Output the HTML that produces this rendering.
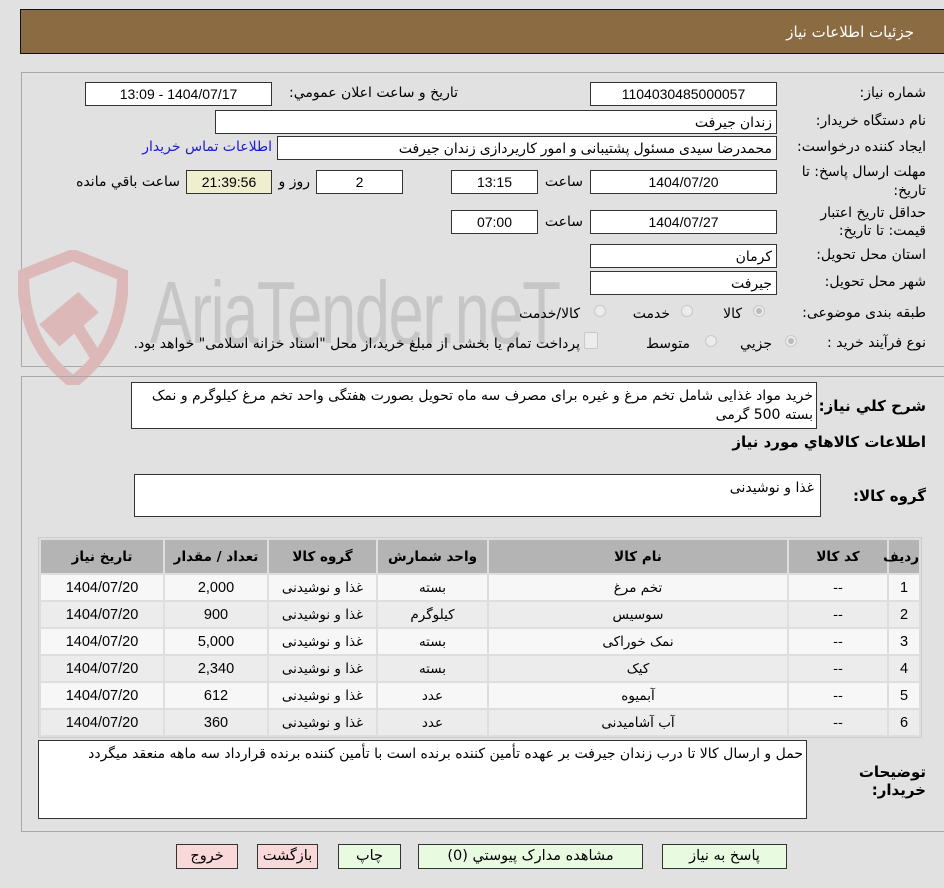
<!DOCTYPE html>
<html><head><meta charset="utf-8">
<style>
body{margin:0;width:944px;height:888px;background:#e1e1e1;font-family:"DejaVu Sans","Liberation Sans",sans-serif;font-size:14px;color:#000;position:relative;overflow:hidden;direction:rtl}
.a{position:absolute;white-space:nowrap}
.in{position:absolute;background:#fff;border:1px solid #333;box-sizing:border-box;text-align:center;line-height:22px;font-size:14px;font-family:"Liberation Sans","DejaVu Sans",sans-serif}
.l{position:absolute;white-space:nowrap;text-align:right}
.panel{position:absolute;border:1px solid #a8a8a8;border-right:none;box-sizing:border-box}
.rad{position:absolute;width:12px;height:12px;border-radius:50%;border:1px solid #c8c8c8;background:#ececec;box-sizing:border-box}
.rad.on::after{content:"";position:absolute;left:2px;top:2px;width:6px;height:6px;border-radius:50%;background:#bbb}
table{position:absolute;left:38px;top:537px;width:884px;border-collapse:separate;border-spacing:2px;background:#dedede;border:1px solid #ccc;table-layout:fixed}
td,th{text-align:center;height:25px;padding:0;font-size:13.5px}
th{background:#b4b4b4;height:33px;font-weight:bold;font-size:13.5px;white-space:nowrap}
tr:nth-child(even) td{background:#f7f7f7}
tr:nth-child(odd) td{background:#ececec}
.num{font-family:"Liberation Sans",sans-serif;font-size:14.5px}
.btn{position:absolute;top:844px;height:25px;border:1px solid #333;box-sizing:border-box;text-align:center;line-height:23px;font-size:14.5px}
.g{background:#e8fbe0}.r{background:#f8d8d8}
.ta{position:absolute;background:#fff;border:1px solid #333;box-sizing:border-box;padding:4px 3px;text-align:right;font-size:14px;line-height:19px;white-space:normal}
</style></head><body>
<div class="a" style="left:20px;top:9px;width:930px;height:45px;background:#8b6b42;border:1px solid #111;box-sizing:border-box"></div>
<div class="a" style="right:30px;top:23px;color:#fff;font-size:15px">جزئیات اطلاعات نیاز</div>

<div class="panel" style="left:21px;top:72px;width:923px;height:295px"></div>
<svg class="a" style="left:18px;top:250px" width="110" height="135" viewBox="0 0 110 135"><path d="M55 5 L105 25 Q105 95 55 132 Q5 95 5 25 Z" fill="none" stroke="#dcb8b8" stroke-width="12"/><path d="M30 75 L60 50 L72 62 L42 88 Z M55 70 L80 110" stroke="#dcb8b8" stroke-width="12" fill="#dcb8b8"/></svg>
<div class="a" style="left:150px;top:262px;font-family:'Liberation Sans',sans-serif;font-size:88px;color:#c6c6c6;transform:scaleX(0.72);transform-origin:left;direction:ltr;letter-spacing:-2px">AriaTender.neT</div>

<div class="l" style="right:18px;top:85px">شماره نیاز:</div>
<div class="in" style="left:590px;top:82px;width:187px;height:24px">1104030485000057</div>
<div class="l" style="right:486px;top:85px">تاریخ و ساعت اعلان عمومي:</div>
<div class="in" style="left:85px;top:82px;width:187px;height:24px">1404/07/17 - 13:09</div>

<div class="l" style="right:18px;top:113px">نام دستگاه خریدار:</div>
<div class="in" style="left:215px;top:110px;width:562px;height:24px;text-align:right;padding-right:4px">زندان جیرفت</div>

<div class="l" style="right:18px;top:139px">ایجاد کننده درخواست:</div>
<div class="in" style="left:277px;top:136px;width:500px;height:24px;text-align:right;padding-right:4px">محمدرضا سیدی مسئول پشتیبانی و امور کاریردازی زندان جیرفت</div>
<div class="l" style="right:672px;top:139px;color:#1a1ad0">اطلاعات تماس خريدار</div>

<div class="l" style="right:18px;top:164px">مهلت ارسال پاسخ: تا</div>
<div class="l" style="right:18px;top:183px">تاریخ:</div>
<div class="in" style="left:590px;top:170px;width:187px;height:24px">1404/07/20</div>
<div class="l" style="right:361px;top:174px">ساعت</div>
<div class="in" style="left:451px;top:170px;width:87px;height:24px">13:15</div>
<div class="in" style="left:316px;top:170px;width:87px;height:24px">2</div>
<div class="l" style="right:634px;top:174px">روز و</div>
<div class="in" style="left:186px;top:170px;width:86px;height:24px;background:#efefcf">21:39:56</div>
<div class="l" style="right:764px;top:174px">ساعت باقي مانده</div>

<div class="l" style="right:18px;top:205px">حداقل تاریخ اعتبار</div>
<div class="l" style="right:18px;top:223px">قیمت: تا تاریخ:</div>
<div class="in" style="left:590px;top:210px;width:187px;height:24px">1404/07/27</div>
<div class="l" style="right:361px;top:214px">ساعت</div>
<div class="in" style="left:451px;top:210px;width:87px;height:24px">07:00</div>

<div class="l" style="right:18px;top:247px">استان محل تحویل:</div>
<div class="in" style="left:590px;top:244px;width:187px;height:24px;text-align:right;padding-right:4px">کرمان</div>
<div class="l" style="right:18px;top:274px">شهر محل تحویل:</div>
<div class="in" style="left:590px;top:271px;width:187px;height:24px;text-align:right;padding-right:4px">جیرفت</div>

<div class="l" style="right:18px;top:305px">طبقه بندی موضوعی:</div>
<div class="rad on" style="left:753px;top:305px"></div>
<div class="l" style="right:202px;top:306px">کالا</div>
<div class="rad" style="left:681px;top:305px"></div>
<div class="l" style="right:274px;top:306px">خدمت</div>
<div class="rad" style="left:594px;top:305px"></div>
<div class="l" style="right:364px;top:306px">کالا/خدمت</div>

<div class="l" style="right:18px;top:335px">نوع فرآیند خرید :</div>
<div class="rad on" style="left:785px;top:335px"></div>
<div class="l" style="right:172px;top:336px">جزيي</div>
<div class="rad" style="left:705px;top:335px"></div>
<div class="l" style="right:254px;top:336px">متوسط</div>
<div class="a" style="left:584px;top:332px;width:12px;height:15px;border:1px solid #c8c8c8;background:#ececec;border-radius:2px"></div>
<div class="l" style="right:364px;top:336px">پرداخت تمام یا بخشی از مبلغ خرید،از محل "اسناد خزانه اسلامی" خواهد بود.</div>

<div class="panel" style="left:21px;top:376px;width:923px;height:456px"></div>
<div class="l" style="right:18px;top:397px;font-weight:bold;font-size:15px">شرح کلي نياز:</div>
<div class="ta" style="left:131px;top:382px;width:686px;height:47px;padding-top:4px">خرید مواد غذایی شامل تخم مرغ و غیره برای مصرف سه ماه تحویل بصورت هفتگی واحد تخم مرغ کیلوگرم و نمک بسته 500 گرمی</div>
<div class="l" style="right:18px;top:433px;font-weight:bold;font-size:15px">اطلاعات کالاهاي مورد نياز</div>
<div class="l" style="right:18px;top:487px;font-weight:bold;font-size:15px">گروه کالا:</div>
<div class="ta" style="left:134px;top:474px;width:687px;height:43px;padding-right:6px;padding-top:4px">غذا و نوشیدنی</div>

<table>
<colgroup><col style="width:30px"><col style="width:98px"><col style="width:298px"><col style="width:109px"><col style="width:107px"><col style="width:102px"><col></colgroup>
<tr><th>رديف</th><th>کد کالا</th><th>نام کالا</th><th>واحد شمارش</th><th>گروه کالا</th><th>تعداد / مقدار</th><th>تاريخ نياز</th></tr>
<tr><td class="num">1</td><td>--</td><td>تخم مرغ</td><td>بسته</td><td>غذا و نوشیدنی</td><td class="num">2,000</td><td class="num">1404/07/20</td></tr>
<tr><td class="num">2</td><td>--</td><td>سوسیس</td><td>کیلوگرم</td><td>غذا و نوشیدنی</td><td class="num">900</td><td class="num">1404/07/20</td></tr>
<tr><td class="num">3</td><td>--</td><td>نمک خوراکی</td><td>بسته</td><td>غذا و نوشیدنی</td><td class="num">5,000</td><td class="num">1404/07/20</td></tr>
<tr><td class="num">4</td><td>--</td><td>کیک</td><td>بسته</td><td>غذا و نوشیدنی</td><td class="num">2,340</td><td class="num">1404/07/20</td></tr>
<tr><td class="num">5</td><td>--</td><td>آبمیوه</td><td>عدد</td><td>غذا و نوشیدنی</td><td class="num">612</td><td class="num">1404/07/20</td></tr>
<tr><td class="num">6</td><td>--</td><td>آب آشامیدنی</td><td>عدد</td><td>غذا و نوشیدنی</td><td class="num">360</td><td class="num">1404/07/20</td></tr>
</table>

<div class="l" style="right:18px;top:763px;font-weight:bold;font-size:15px">توضیحات</div>
<div class="l" style="right:18px;top:781px;font-weight:bold;font-size:15px">خریدار:</div>
<div class="ta" style="left:38px;top:740px;width:769px;height:79px">حمل و ارسال کالا تا درب زندان جیرفت بر عهده تأمین کننده برنده است با تأمین کننده برنده قرارداد سه ماهه منعقد میگردد</div>

<div class="btn g" style="left:662px;width:125px">پاسخ به نياز</div>
<div class="btn g" style="left:418px;width:225px">مشاهده مدارک پيوستي (0)</div>
<div class="btn g" style="left:338px;width:63px">چاپ</div>
<div class="btn r" style="left:257px;width:61px">بازگشت</div>
<div class="btn r" style="left:176px;width:62px">خروج</div>
</body></html>
